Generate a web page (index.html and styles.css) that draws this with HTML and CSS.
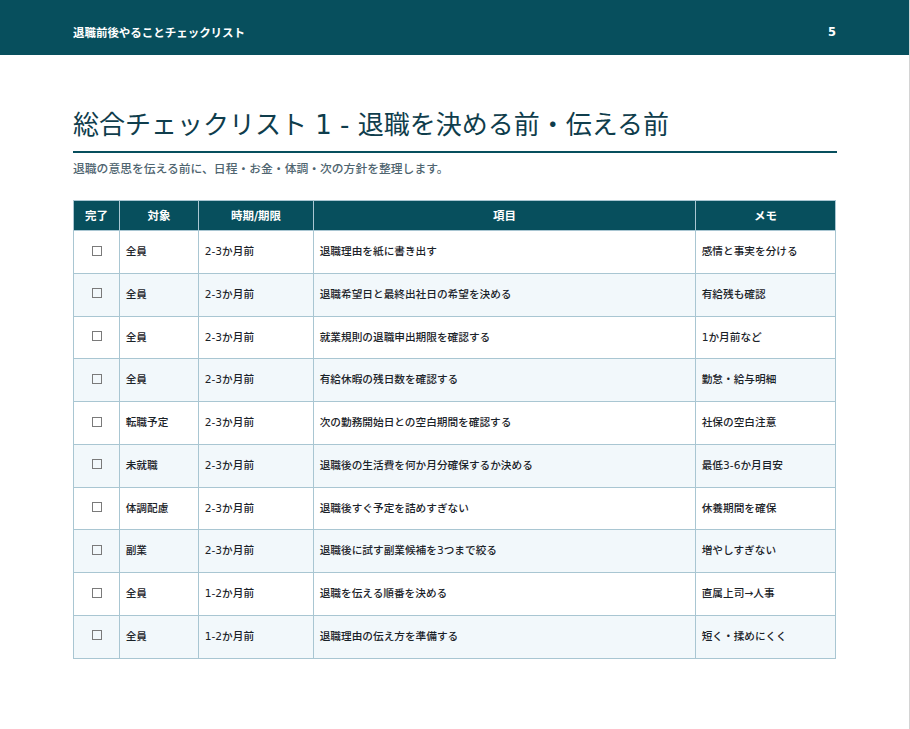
FILE: index.html
```html
<!DOCTYPE html>
<html lang="ja">
<head>
<meta charset="utf-8">
<title>退職前後やることチェックリスト</title>
<link rel="stylesheet" href="styles.css">
</head>
<body>
<div class="page">
  <header class="topbar">
    <span class="doc-title">退職前後やることチェックリスト</span>
    <span class="page-no">5</span>
  </header>
  <main class="content">
    <h1 class="title">総合チェックリスト 1 - 退職を決める前・伝える前</h1>
    <p class="lead">退職の意思を伝える前に、日程・お金・体調・次の方針を整理します。</p>
    <table class="checklist">
      <colgroup>
        <col class="c-done"><col class="c-target"><col class="c-time"><col class="c-item"><col class="c-memo">
      </colgroup>
      <thead>
        <tr><th>完了</th><th>対象</th><th>時期/期限</th><th>項目</th><th>メモ</th></tr>
      </thead>
      <tbody>
        <tr><td class="box"><span class="tick"></span></td><td>全員</td><td>2-3か月前</td><td>退職理由を紙に書き出す</td><td>感情と事実を分ける</td></tr>
        <tr><td class="box"><span class="tick"></span></td><td>全員</td><td>2-3か月前</td><td>退職希望日と最終出社日の希望を決める</td><td>有給残も確認</td></tr>
        <tr><td class="box"><span class="tick"></span></td><td>全員</td><td>2-3か月前</td><td>就業規則の退職申出期限を確認する</td><td>1か月前など</td></tr>
        <tr><td class="box"><span class="tick"></span></td><td>全員</td><td>2-3か月前</td><td>有給休暇の残日数を確認する</td><td>勤怠・給与明細</td></tr>
        <tr><td class="box"><span class="tick"></span></td><td>転職予定</td><td>2-3か月前</td><td>次の勤務開始日との空白期間を確認する</td><td>社保の空白注意</td></tr>
        <tr><td class="box"><span class="tick"></span></td><td>未就職</td><td>2-3か月前</td><td>退職後の生活費を何か月分確保するか決める</td><td>最低3-6か月目安</td></tr>
        <tr><td class="box"><span class="tick"></span></td><td>体調配慮</td><td>2-3か月前</td><td>退職後すぐ予定を詰めすぎない</td><td>休養期間を確保</td></tr>
        <tr><td class="box"><span class="tick"></span></td><td>副業</td><td>2-3か月前</td><td>退職後に試す副業候補を3つまで絞る</td><td>増やしすぎない</td></tr>
        <tr><td class="box"><span class="tick"></span></td><td>全員</td><td>1-2か月前</td><td>退職を伝える順番を決める</td><td>直属上司→人事</td></tr>
        <tr><td class="box"><span class="tick"></span></td><td>全員</td><td>1-2か月前</td><td>退職理由の伝え方を準備する</td><td>短く・揉めにくく</td></tr>
      </tbody>
    </table>
  </main>
</div>
</body>
</html>
```

FILE: styles.css
```css
html, body {
  margin: 0;
  padding: 0;
  background: #fff;
}
body {
  height: 729px;
  overflow: hidden;
  font-family: "DejaVu Sans", "Noto Sans CJK JP", sans-serif;
  color: #1f2a30;
}
.page {
  width: 909px;
  height: 729px;
  border-right: 1px solid #d4d4d4;
  background: #fff;
}
.topbar {
  height: 55px;
  padding: 10px 73px 2px;
  box-sizing: border-box;
  background: #074f5d;
  color: #fff;
  display: flex;
  justify-content: space-between;
  align-items: center;
  font-size: 11.47px;
  font-weight: 700;
}
.content {
  padding: 0 72px 0 73px;
}
.title {
  margin: 0;
  padding-top: 51px;
  padding-bottom: 6px;
  font-size: 26px;
  line-height: 39px;
  font-weight: 400;
  color: #0f3d4c;
  border-bottom: 2px solid #074f5d;
}
.lead {
  margin: 8px 0 0;
  font-size: 11.8px;
  line-height: 17px;
  font-weight: 500;
  color: #4f6570;
}
.checklist {
  margin-top: 22.2px;
  width: 762px;
  table-layout: fixed;
  border-collapse: collapse;
  font-size: 10.67px;
}
.c-done { width: 46px; }
.c-target { width: 79px; }
.c-time { width: 115px; }
.c-item { width: 382px; }
.c-memo { width: 140px; }
th, td {
  border: 1px solid #a9c6d2;
  padding: 0 5.7px;
}
th {
  height: 27px;
  padding-bottom: 2px;
  background: #074f5d;
  color: #fff;
  font-size: 11.47px;
  font-weight: 700;
  text-align: center;
}
td {
  height: 38.75px;
  padding-bottom: 3px;
  font-weight: 500;
  color: #1a2228;
  text-align: left;
}
tbody tr:nth-child(even) td {
  background: #f2f8fb;
}
td.box {
  text-align: center;
  line-height: 0;
}
.tick {
  display: inline-block;
  width: 8px;
  height: 8px;
  border: 1px solid #7a7a7a;
}
```
